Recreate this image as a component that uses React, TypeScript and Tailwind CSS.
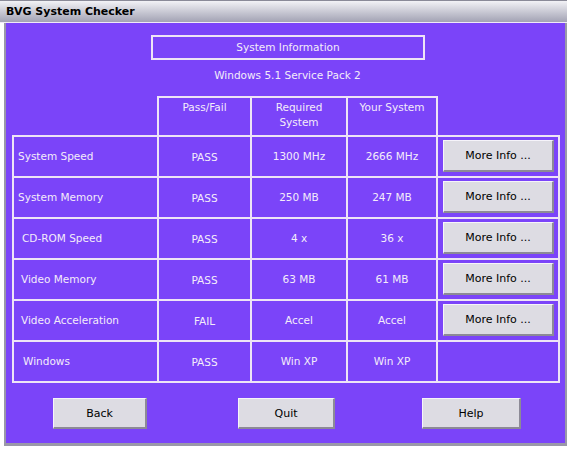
import React from 'react';

interface Row {
  label: string;
  indent: string;
  status: string;
  required: string;
  yours: string;
  more: boolean;
}

const rows: Row[] = [
  { label: 'System Speed', indent: 'pl-[4px]', status: 'PASS', required: '1300 MHz', yours: '2666 MHz', more: true },
  { label: 'System Memory', indent: 'pl-[4px]', status: 'PASS', required: '250 MB', yours: '247 MB', more: true },
  { label: 'CD-ROM Speed', indent: 'pl-[8px]', status: 'PASS', required: '4 x', yours: '36 x', more: true },
  { label: 'Video Memory', indent: 'pl-[7px]', status: 'PASS', required: '63 MB', yours: '61 MB', more: true },
  { label: 'Video Acceleration', indent: 'pl-[7px]', status: 'FAIL', required: 'Accel', yours: 'Accel', more: true },
  { label: 'Windows', indent: 'pl-[9px]', status: 'PASS', required: 'Win XP', yours: 'Win XP', more: false },
];

const btn =
  'bg-[#dddce3] text-black text-[11px] border-t border-l border-t-[#f6f4fa] border-l-[#f6f4fa] border-b-2 border-r-2 border-b-[#8c8a96] border-r-[#8c8a96] flex items-center justify-center';

const App: React.FC = () => {
  return (
    <div className="w-[571px] h-[450px] bg-white overflow-hidden font-['DejaVu_Sans',sans-serif] text-[#f4ecfa]">
      {/* Title bar */}
      <div className="h-[22px] w-[567px] bg-gradient-to-b from-[#f2f2f6] to-[#a3a3b4] border-t border-[#8a8a98] flex items-center pl-[6px] pt-[2px]">
        <span className="text-[11px] font-bold text-black">BVG System Checker</span>
      </div>
      <div className="h-px w-[567px] bg-[#f0eaf8]" />

      {/* Window body */}
      <div className="ml-[4px] w-[563px] border-l-2 border-r-2 border-b-[3px] border-[#9a98a8]">
        <div className="w-[559px] h-[420px] bg-[#7b44f9] pt-[12px] text-[10.5px]">
          <div className="ml-[145px] w-[274px] h-[25px] border-2 border-[#eee4f6] flex items-center justify-center">
            System Information
          </div>
          <div className="mt-[8px] h-[14px] leading-[14px] text-center pl-[4px]">Windows 5.1 Service Pack 2</div>

          {/* Table */}
          <div className="ml-[6px] mt-[14px] grid grid-cols-[145px_93px_96px_90px_124px]">
            <div className="h-[39px]" />
            <div className="h-[39px] border-l-2 border-t-2 border-[#eee4f6] text-center pt-[2px] leading-[15px]">Pass/Fail</div>
            <div className="h-[39px] border-l-2 border-t-2 border-[#eee4f6] text-center pt-[2px] leading-[15px]">
              Required
              <br />
              System
            </div>
            <div className="h-[39px] border-l-2 border-t-2 border-[#eee4f6] text-center pt-[2px] leading-[15px]">Your System</div>
            <div className="h-[39px] border-l-2 border-[#eee4f6]" />

            {rows.map((r, i) => {
              const last = i === rows.length - 1;
              const cell = `border-l-2 border-t-2 border-[#eee4f6] ${last ? 'border-b-2 h-[43px]' : 'h-[41px]'}`;
              return (
                <React.Fragment key={r.label}>
                  <div className={`${cell} flex items-center ${r.indent}`}>{r.label}</div>
                  <div className={`${cell} flex items-center justify-center pt-[3px]`}>{r.status}</div>
                  <div className={`${cell} flex items-center justify-center pt-[1px]`}>{r.required}</div>
                  <div className={`${cell} flex items-center justify-center pt-[1px]`}>{r.yours}</div>
                  <div className={`${cell} border-r-2 pl-[5px] pt-[3px]`}>
                    {r.more && <div className={`${btn} w-[111px] h-[32px] pt-[2px]`}>More Info ...</div>}
                  </div>
                </React.Fragment>
              );
            })}
          </div>

          {/* Bottom buttons */}
          <div className="flex mt-[15px]">
            <div className={`${btn} ml-[47px] w-[94px] h-[31px] pt-[2px]`}>Back</div>
            <div className={`${btn} ml-[91px] w-[97px] h-[31px] pt-[2px]`}>Quit</div>
            <div className={`${btn} ml-[87px] w-[99px] h-[31px] pt-[2px]`}>Help</div>
          </div>
        </div>
      </div>
    </div>
  );
};

export default App;
